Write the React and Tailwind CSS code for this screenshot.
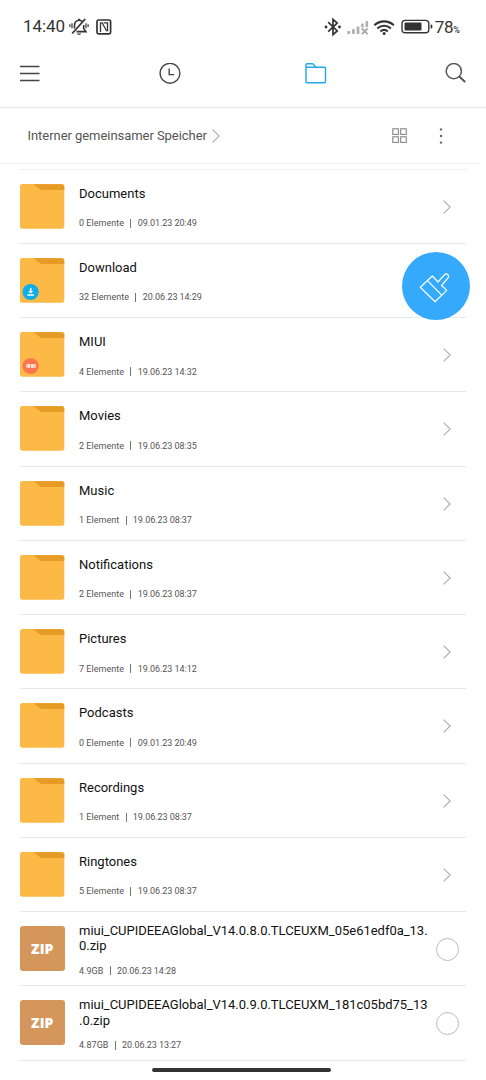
import React from 'react';

const folders = [
  { name: 'Documents', count: '0 Elemente', date: '09.01.23 20:49' },
  { name: 'Download', count: '32 Elemente', date: '20.06.23 14:29', badge: 'download' },
  { name: 'MIUI', count: '4 Elemente', date: '19.06.23 14:32', badge: 'miui' },
  { name: 'Movies', count: '2 Elemente', date: '19.06.23 08:35' },
  { name: 'Music', count: '1 Element', date: '19.06.23 08:37' },
  { name: 'Notifications', count: '2 Elemente', date: '19.06.23 08:37' },
  { name: 'Pictures', count: '7 Elemente', date: '19.06.23 14:12' },
  { name: 'Podcasts', count: '0 Elemente', date: '09.01.23 20:49' },
  { name: 'Recordings', count: '1 Element', date: '19.06.23 08:37' },
  { name: 'Ringtones', count: '5 Elemente', date: '19.06.23 08:37' },
];

const archives = [
  { lines: ['miui_CUPIDEEAGlobal_V14.0.8.0.TLCEUXM_05e61edf0a_13.', '0.zip'], size: '4.9GB', date: '20.06.23 14:28' },
  { lines: ['miui_CUPIDEEAGlobal_V14.0.9.0.TLCEUXM_181c05bd75_13', '.0.zip'], size: '4.87GB', date: '20.06.23 13:27' },
];

function MutedBell() {
  return (
    <svg className="ml-1 h-[18px] w-5" viewBox="0 0 20 18" fill="none" stroke="#333" strokeWidth="1.6">
      <path d="M5.500 10.500V7.200C5.500 4.400 7.400 2.300 10 2.300c1.200 0 2.200.4 3 1.100M14.700 7v3.600l2.200 3H7.500" />
      <path d="M10 .8v1.500M16.200 1 3.200 15.500" strokeWidth="1.800" />
      <path d="M7.800 15.500c.6 1.800 3.800 1.800 4.400 0Z" fill="#333" stroke="none" />
      <path d="M3 5.200v5M.9 6.300v2.800M17 5.200v5M19.100 6.300v2.800" strokeWidth="1.200" />
    </svg>
  );
}

function Nfc() {
  return (
    <svg className="ml-[7px] h-4 w-4" viewBox="0 0 16 16" fill="none" stroke="#333">
      <rect x="1" y="1" width="13.600" height="13.800" rx="1.500" strokeWidth="1.700" />
      <path d="M4.500 13V3.800h1.600l4 7.200M7.600 3.800h3.900v7.900H9.800" strokeWidth="1.300" />
    </svg>
  );
}

function StatusIcons() {
  return (
    <svg className="h-5 w-[110px]" viewBox="0 0 110 20">
      <path d="m4.200 5.200 9 8.800-4.200 3.600V2.400l4.200 3.600-9 8.600" fill="none" stroke="#333" strokeWidth="1.700" />
      <circle cx="2" cy="10" r="1.400" fill="#333" />
      <circle cx="15.500" cy="10" r="1.400" fill="#333" />
      <g fill="#b0b0b0">
        <rect x="23.200" y="14" width="3" height="3" rx=".8" />
        <rect x="28" y="12" width="2.800" height="5" rx=".8" />
        <rect x="32.600" y="9.500" width="2.800" height="7.500" rx=".8" />
        <rect x="37.200" y="6.500" width="2.500" height="4" rx=".5" />
        <rect x="41.600" y="4" width="2.500" height="6" rx=".5" />
      </g>
      <path d="m37.800 11.500 5.800 5.600m0-5.600-5.800 5.600" stroke="#aaa" strokeWidth="1.900" />
      <g fill="none" stroke="#333" strokeWidth="2.100">
        <path d="M50.400 8.300c5.600-5.200 13.800-5.200 19.400 0" />
        <path d="M53.300 11.500c4-3.600 9.600-3.600 13.600 0" />
        <path d="M56.400 14.500c2.200-1.900 5.200-1.900 7.400 0" />
      </g>
      <circle cx="60.100" cy="16.400" r="1.500" fill="#333" />
      <rect x="78" y="3.400" width="26.800" height="12.400" rx="3.300" fill="none" stroke="#333" strokeWidth="1.400" />
      <rect x="80.500" y="5.600" width="17" height="8" rx="1" fill="#333" />
      <rect x="106.600" y="7.600" width="1.700" height="4" rx=".8" fill="#333" />
    </svg>
  );
}

function Chevron({ className }) {
  return (
    <svg className={className} viewBox="0 0 8 14" fill="none" stroke="#aaa" strokeWidth="1.100">
      <path d="m.6.6 6.600 6.400-6.600 6.400" />
    </svg>
  );
}

function FolderIcon({ badge }) {
  return (
    <svg className="h-[45px] w-[45px] shrink-0" viewBox="0 0 45 45">
      <rect x="0" y="0" width="44.300" height="44.700" rx="2.500" fill="#fcb946" />
      <path d="M13.500.2H41.800a2.500 2.500 0 0 1 2.500 2.500v3.200H22.500c-1.300 0-2-.3-2.800-1Z" fill="#e69b25" />
      {badge === 'download' && (
        <g>
          <circle cx="10.600" cy="34" r="8.100" fill="#0daeea" />
          <path d="M9.900 30h1.600v3h1.900l-2.700 2.600L8 33h1.900ZM7.400 36.300h6.500v1.500H7.400Z" fill="#fff" />
        </g>
      )}
      {badge === 'miui' && (
        <g>
          <circle cx="10.600" cy="34" r="8.100" fill="#fb764c" />
          <path d="M7 35.800v-3.300h2.700v3.300M8.400 33v2.800M11.300 32v3.800M12.600 32v3.300h1.400V32M15.200 32v3.800" fill="none" stroke="#fff" strokeWidth=".95" />
        </g>
      )}
    </svg>
  );
}

function Details({ left, date }) {
  return (
    <div className="flex items-center text-[9px] leading-3 text-[#555]">
      <span className="tracking-[0.030px]">{left}</span>
      <span className="mx-[6.300px] h-[9px] w-px bg-[#777]" />
      <span className="tracking-[-0.050px]">{date}</span>
    </div>
  );
}

export default function App() {
  return (
    <div className="relative flex h-[1080px] w-[486px] flex-col overflow-hidden bg-white font-['Roboto',sans-serif]">
      <div className="flex h-[50px] shrink-0 items-center pl-[23px] pr-[26px] pt-[3px] text-[#333]">
        <span className="w-[42px] pt-px text-[17px] tracking-[-0.1px]">14:40</span>
        <MutedBell />
        <Nfc />
        <div className="ml-auto flex items-center">
          <StatusIcons />
          <span className="ml-[1px] pt-px text-[17px] leading-5 tracking-[-0.3px]">78</span>
          <span className="pt-[6px] text-[9px] font-medium leading-3">%</span>
        </div>
      </div>

      <nav className="flex h-[58px] shrink-0 items-start border-b border-[#e8e8e8] pl-5 pt-[13px]">
        <svg className="h-[22px] w-5" viewBox="0 0 20 22" stroke="#444" strokeWidth="1.400">
          <path d="M0 3.500h19.500M0 10.500h19.500M0 17.500h19.500" />
        </svg>
        <svg className="ml-[119px] h-[22px] w-[22px]" viewBox="0 0 22 22" fill="none" stroke="#444" strokeWidth="1.400">
          <circle cx="11" cy="10.300" r="9.900" />
          <path d="M10.200 5.500v6.100h5" />
        </svg>
        <svg className="ml-[124px] h-[22px] w-[22px]" viewBox="0 0 22 22" fill="none" stroke="#20a9e8" strokeWidth="1.400">
          <path d="M1 18.500V1.800Q1 .8 2 .8h5.300q.7 0 1.200.6l2.300 2.900h8.700q1 0 1 1v13.400q0 1-1 1H2q-1 0-1-1ZM1 4.300h10" />
        </svg>
        <svg className="ml-[118px] h-[22px] w-[22px]" viewBox="0 0 22 22" fill="none" stroke="#555" strokeWidth="1.500">
          <circle cx="8.800" cy="8.200" r="7.600" />
          <path d="m14.200 13.500 6 5.600" strokeWidth="2" />
        </svg>
      </nav>

      <div className="flex h-[56px] w-[481px] shrink-0 items-center border-b border-[#eee] pl-[27.500px]">
        <span className="pt-px text-[13px] tracking-[-0.050px] text-[#555]">Interner gemeinsamer Speicher</span>
        <Chevron className="ml-[5px] h-[14px] w-2" />
        <svg className="ml-auto h-4 w-4" viewBox="0 0 16 16" fill="none" stroke="#888" strokeWidth="1.100">
          <rect x=".8" y=".8" width="5.600" height="5.600" />
          <rect x="8.700" y=".8" width="5.600" height="5.600" />
          <rect x=".8" y="8.800" width="5.600" height="5.600" />
          <rect x="8.700" y="8.800" width="5.600" height="5.600" />
        </svg>
        <svg className="ml-[31px] mr-[38px] h-4 w-1" viewBox="0 0 4 16" fill="#666">
          <circle cx="2" cy="1.400" r="1.200" />
          <circle cx="2" cy="8" r="1.200" />
          <circle cx="2" cy="14.600" r="1.200" />
        </svg>
      </div>

      <main className="mx-5 mt-[4.500px] w-[446px] border-t border-[#eee]">
        {folders.map((folder) => (
          <div key={folder.name} className="flex h-[74.250px] items-center border-b border-[#e8e8e8]">
            <FolderIcon badge={folder.badge} />
            <div className="ml-[14px] flex flex-1 flex-col gap-[15.500px] pt-[2.500px]">
              <span className="text-[13px] leading-4 text-[#111]">{folder.name}</span>
              <Details left={folder.count} date={folder.date} />
            </div>
            <Chevron className="mr-[15px] mt-px h-[14px] w-2" />
          </div>
        ))}
        {archives.map((file) => (
          <div key={file.size} className="flex h-[74.250px] items-center border-b border-[#e8e8e8]">
            <div className="flex h-[45px] w-[44.500px] shrink-0 items-center justify-center rounded-[3px] bg-[#d4965b] font-['Open_Sans',sans-serif] text-[14px] font-extrabold leading-4 text-white">
              ZIP
            </div>
            <div className="ml-[14.500px] flex flex-1 flex-col gap-[11px] whitespace-nowrap pt-[2.500px]">
              <div className="text-[13px] leading-[15.500px] tracking-[-0.020px] text-[#111]">
                <div>{file.lines[0]}</div>
                <div>{file.lines[1]}</div>
              </div>
              <Details left={file.size} date={file.date} />
            </div>
            <span className="mr-[7px] mt-px h-[23px] w-[23px] shrink-0 rounded-full border border-[#bbb]" />
          </div>
        ))}
      </main>

      <button className="absolute left-[402px] top-[252px] flex h-[68px] w-[68px] items-center justify-center rounded-full bg-[#35a9fb]" aria-label="Clean">
        <svg className="h-[34px] w-[34px]" viewBox="0 0 34 34" fill="none" stroke="#fff" strokeWidth="1.200" strokeLinejoin="round">
          <path d="M1.300 18.300 13.300 7l5.700 6 6.400-7.100a2.300 2.300 0 0 1 3.600 2.900l-6.500 7.700 5.200 4.900L16 32.800ZM8.500 11.700l14.200 14.500" />
        </svg>
      </button>
      <div className="absolute left-[152px] top-[1068px] h-[4px] w-[179px] rounded-full bg-[#333]" />
    </div>
  );
}
